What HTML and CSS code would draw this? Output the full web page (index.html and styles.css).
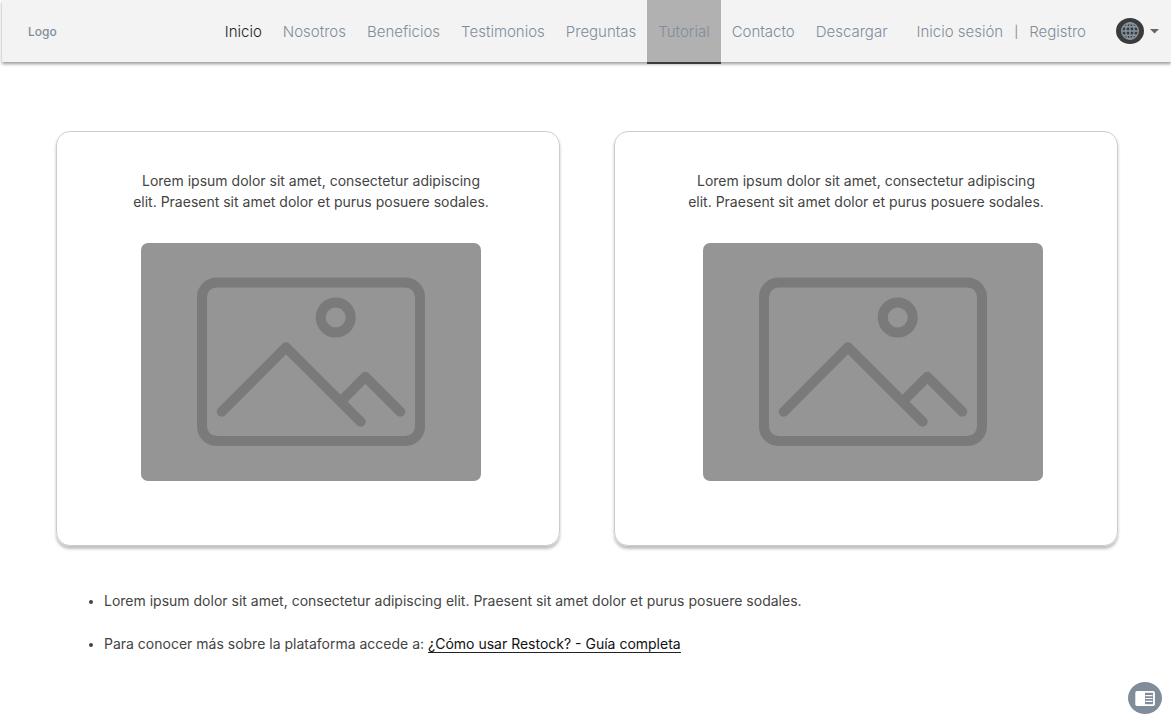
FILE: index.html
```html
<!DOCTYPE html>
<html lang="es">
<head>
  <meta charset="utf-8">
  <meta name="viewport" content="width=device-width, initial-scale=1">
  <title>Tutorial</title>
  <link rel="stylesheet" href="styles.css">
</head>
<body>
  <header class="topbar">
    <a class="logo" href="#">Logo</a>
    <nav class="nav">
      <a class="nav-link nav-link-strong" href="#">Inicio</a>
      <a class="nav-link" href="#">Nosotros</a>
      <a class="nav-link" href="#">Beneficios</a>
      <a class="nav-link" href="#">Testimonios</a>
      <a class="nav-link" href="#">Preguntas</a>
      <a class="nav-link nav-link-current" href="#" aria-current="page">Tutorial</a>
      <a class="nav-link" href="#">Contacto</a>
      <a class="nav-link" href="#">Descargar</a>
    </nav>
    <div class="account">
      <a class="account-link" href="#">Inicio sesión</a>
      <span class="separator">|</span>
      <a class="account-link" href="#">Registro</a>
    </div>
    <button class="language" type="button" aria-label="Idioma">
      <svg class="globe" viewBox="0 0 28 26" aria-hidden="true">
        <ellipse cx="14" cy="13" rx="14" ry="13" fill="#3b3b3b"/>
        <g fill="none" stroke="#8795a3" stroke-width="1.4">
          <circle cx="14" cy="13" r="8.3"/>
          <ellipse cx="14" cy="13" rx="4.2" ry="8.3"/>
          <path d="M14 4.7v16.6M5.7 13h16.6M7 8.7h14M7 17.3h14"/>
        </g>
      </svg>
      <svg class="caret" viewBox="0 0 9 5" aria-hidden="true"><path d="M0 0h9L4.5 4.6z" fill="#666"/></svg>
    </button>
  </header>

  <main class="content">
    <div class="cards">
      <article class="card">
        <p class="card-text">Lorem ipsum dolor sit amet, consectetur adipiscing<br>elit. Praesent sit amet dolor et purus posuere sodales.</p>
        <svg class="picture" viewBox="0 0 340 238" role="img" aria-label="Imagen">
          <rect width="340" height="238" rx="7" fill="#959595"/>
          <g fill="none" stroke="#7a7a7a" stroke-width="10" stroke-linecap="round" stroke-linejoin="round">
            <rect x="61" y="39.5" width="218" height="158.5" rx="14.5"/>
            <circle cx="194.7" cy="74.5" r="15"/>
            <path d="M80.7 168.8L145 104.3l74.7 74.5M202.3 156l22-22.2 35 35"/>
          </g>
        </svg>
      </article>
      <article class="card card-offset">
        <p class="card-text">Lorem ipsum dolor sit amet, consectetur adipiscing<br>elit. Praesent sit amet dolor et purus posuere sodales.</p>
        <svg class="picture" viewBox="0 0 340 238" role="img" aria-label="Imagen">
          <rect width="340" height="238" rx="7" fill="#959595"/>
          <g fill="none" stroke="#7a7a7a" stroke-width="10" stroke-linecap="round" stroke-linejoin="round">
            <rect x="61" y="39.5" width="218" height="158.5" rx="14.5"/>
            <circle cx="194.7" cy="74.5" r="15"/>
            <path d="M80.7 168.8L145 104.3l74.7 74.5M202.3 156l22-22.2 35 35"/>
          </g>
        </svg>
      </article>
    </div>

    <ul class="notes">
      <li>Lorem ipsum dolor sit amet, consectetur adipiscing elit. Praesent sit amet dolor et purus posuere sodales.</li>
      <li>Para conocer más sobre la plataforma accede a: <a class="guide" href="#">¿Cómo usar Restock? - Guía completa</a></li>
    </ul>
  </main>

  <button class="panel-button" type="button" aria-label="Abrir panel">
    <svg class="panel-icon" viewBox="0 0 34 32" aria-hidden="true">
      <ellipse cx="17" cy="16" rx="17" ry="16" fill="#808c99"/>
      <rect x="7.3" y="9" width="19.6" height="15" rx="1.8" fill="#fff"/>
      <path d="M17 10.8h8v11.4h-8z" fill="#808c99"/>
      <path d="M17.5 13.6h7M17.5 16.5h7M17.5 19.4h7" stroke="#fff" stroke-width="1.1"/>
    </svg>
  </button>
</body>
</html>
```

FILE: styles.css
```css
* {
  box-sizing: border-box;
}

body {
  margin: 0;
  background: #fff;
  color: #444;
  font-family: Inter, "Liberation Sans", sans-serif;
  font-size: 14px;
}

a {
  color: inherit;
  text-decoration: none;
}

button {
  padding: 0;
  border: 0;
  background: none;
  cursor: pointer;
}

.topbar {
  display: flex;
  align-items: center;
  height: 62px;
  margin-left: 2px;
  padding: 0 12px 0 26px;
  background: #f3f3f3;
  box-shadow: 0 2px 3px rgba(0, 0, 0, 0.4);
  color: #7f8d9b;
  font-size: 15px;
  font-weight: 300;
  white-space: nowrap;
}

.logo {
  margin-right: auto;
  font-size: 12px;
  font-weight: 500;
}

.nav {
  display: flex;
  align-self: flex-start;
  gap: 1px;
}

.nav-link {
  height: 64px;
  padding: 0 10px;
  line-height: 64px;
}

.nav-link-strong {
  color: #222;
}

.nav-link-current {
  padding: 0 11px;
  border-bottom: 2px solid #3b3b3b;
  background: #b1b1b1;
}

.account {
  display: flex;
  align-items: center;
  gap: 11px;
  margin-left: 19px;
}

.separator {
  font-size: 12px;
  font-weight: 400;
}

.language {
  display: flex;
  align-items: center;
  gap: 6px;
  margin-left: 30px;
}

.globe {
  width: 28px;
  height: 26px;
}

.caret {
  width: 9px;
  height: 5px;
}

.content {
  padding: 69px 53px 24px 56px;
}

.cards {
  display: grid;
  grid-template-columns: 1fr 1fr;
  gap: 54px;
}

.card {
  display: flex;
  flex-direction: column;
  align-items: center;
  padding: 38px 0 64px 6px;
  border: 1px solid #ccc;
  border-radius: 14px;
  box-shadow: 0 3px 3px rgba(0, 0, 0, 0.25);
}

.card-text {
  margin: 0 0 31px;
  font-size: 14px;
  line-height: 21px;
  text-align: center;
}

.picture {
  width: 340px;
  max-width: 100%;
}

.card-offset {
  padding-left: 0;
}

.card-offset .picture {
  margin-left: 14px;
}

.notes {
  display: grid;
  gap: 22px;
  margin: 44px 0 0;
  padding-left: 48px;
  line-height: 21px;
}

.notes li::marker {
  font-size: 12px;
}

.guide {
  border-bottom: 1px solid #222;
  color: #111;
}

.panel-button {
  position: fixed;
  right: 9px;
  bottom: 11px;
}

.panel-icon {
  display: block;
  width: 34px;
  height: 32px;
}
```
